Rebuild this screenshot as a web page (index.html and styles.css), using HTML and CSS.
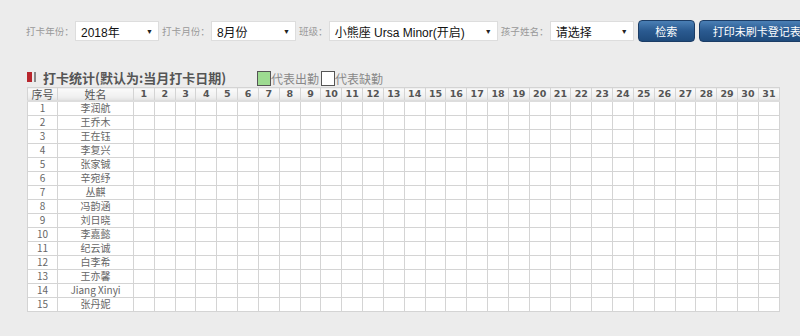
FILE: index.html
```html
<!DOCTYPE html>
<html lang="zh-CN">
  <head>
    <meta charset="UTF-8" />
    <title>打卡统计</title>
    <link rel="stylesheet" href="styles.css">
  </head>

  <body>
    <div class="toolbar">
      <label>打卡年份：</label>
      <div class="select w-year"><span>2018年</span><i>▼</i></div>
      <label>打卡月份：</label>
      <div class="select w-month"><span>8月份</span><i>▼</i></div>
      <label>班级：</label>
      <div class="select w-class"><span>小熊座 Ursa Minor(开启)</span><i>▼</i></div>
      <label>孩子姓名：</label>
      <div class="select w-kid"><span>请选择</span><i>▼</i></div>
      <button class="btn btn-search">检索</button>
      <button class="btn btn-print">打印未刷卡登记表</button>
    </div>

    <div class="title-row">
      <span class="mark"><b></b><s></s></span>
      <h2>打卡统计(默认为:当月打卡日期)</h2>
      <span class="legend"><em class="box green"></em>代表出勤<em class="box"></em>代表缺勤</span>
    </div>

    <table class="grid" id="grid">
      <colgroup>
        <col class="c-no">
        <col class="c-name">
      </colgroup>
      <thead><tr id="headRow"><th>序号</th><th>姓名</th></tr></thead>
      <tbody id="body"></tbody>
    </table>

    <script>
      const names = ["李润航", "王乔木", "王在钰", "李复兴", "张家铖", "辛宛纾", "丛麒", "冯韵涵",
        "刘日晓", "李嘉懿", "纪云诚", "白李希", "王亦馨", "Jiang Xinyi", "张丹妮"];

      const head = document.getElementById("headRow");
      for (let d = 1; d <= 31; d++) {
        head.innerHTML += `<th>${d}</th>`;
      }

      const body = document.getElementById("body");
      names.forEach((name, i) => {
        let row = `<tr><td>${i + 1}</td><td>${name}</td>`;
        for (let d = 0; d < 31; d++) {
          row += "<td></td>";
        }
        body.innerHTML += row + "</tr>";
      });
    </script>
  </body>
</html>
```

FILE: styles.css
```css
body {
  margin: 0;
  background-color: #ececec;
  font-family: "Liberation Sans", "Noto Sans CJK SC", sans-serif;
  color: #555;
}

.toolbar {
  display: flex;
  align-items: center;
  height: 22px;
  margin-top: 20px;
  padding-left: 26px;
  white-space: nowrap;
  overflow: hidden;
}

.toolbar > * {
  flex-shrink: 0;
}

.toolbar label {
  font-size: 9.6px;
  color: #999;
  margin-right: 1px;
  margin-left: 3px;
}

.toolbar label:first-child {
  margin-left: 0;
}

.select {
  display: flex;
  align-items: center;
  justify-content: space-between;
  height: 20px;
  box-sizing: border-box;
  background: #fff;
  border: 1px solid #ddd;
  padding: 0 5px 0 5px;
  font-size: 12px;
  color: #111;
}

.select i {
  font-style: normal;
  font-size: 7px;
  color: #222;
}

.w-year { width: 84px; }
.w-month { width: 85px; }
.w-class { width: 169px; }
.w-kid { width: 84px; }

.btn {
  height: 22px;
  border: 1px solid #1c3d66;
  border-radius: 4px;
  background: linear-gradient(#4a7fb5, #2a5a90 50%, #1f4b7c);
  color: #fff;
  font-family: "Noto Sans CJK SC", sans-serif;
  font-size: 11px;
  padding: 0;
}

.btn-search {
  width: 57px;
  margin-left: 4px;
}

.btn-print {
  width: 124px;
  margin-left: 4px;
  padding-right: 8px;
}

.title-row {
  display: flex;
  align-items: center;
  height: 18px;
  margin-top: 26px;
  padding-left: 27px;
}

.mark {
  display: flex;
  gap: 2px;
  margin-right: 7px;
}

.mark b {
  display: block;
  width: 5px;
  height: 10px;
  background: #b8262d;
}

.mark s {
  display: block;
  width: 2px;
  height: 10px;
  background: #888;
}

h2 {
  margin: 0;
  font-family: "Noto Sans CJK SC", sans-serif;
  font-size: 13px;
  font-weight: bold;
  color: #555;
}

.legend {
  display: flex;
  align-items: center;
  margin-left: 31px;
  margin-top: 3px;
  font-family: "Noto Sans CJK SC", sans-serif;
  font-size: 12px;
  color: #888;
}

.box {
  display: block;
  width: 12px;
  height: 13px;
  border: 1px solid #555;
  background: #fff;
  margin-left: 2px;
}

.box.green {
  background: #9ddb91;
  margin-left: 0;
}

.grid {
  margin: 1px 0 0 27px;
  width: 753px;
  table-layout: fixed;
  border-collapse: collapse;
  background: #fff;
}

.c-no { width: 30px; }
.c-name { width: 76px; }

.grid tbody tr {
  height: 14px;
}

.grid th,
.grid td {
  border: 1px solid #d4d4d4;
  padding: 0;
  text-align: center;
  vertical-align: middle;
  font-size: 10px;
  line-height: 12px;
  overflow: hidden;
  white-space: nowrap;
}

.grid th {
  height: 12px;
  font-family: "DejaVu Sans", "Noto Sans CJK SC", sans-serif;
  font-weight: bold;
  font-size: 9.5px;
  color: #555;
  background: linear-gradient(#fafafa, #f0f0f0 70%, #e2e2e2);
  border-bottom: 2px solid #ddd;
}

.grid th:nth-child(-n+2) {
  font-family: "Noto Sans CJK SC", sans-serif;
  font-weight: normal;
  font-size: 11px;
}

.grid td {
  font-family: "Noto Sans CJK SC", sans-serif;
  color: #666;
  font-size: 10px;
}
```
